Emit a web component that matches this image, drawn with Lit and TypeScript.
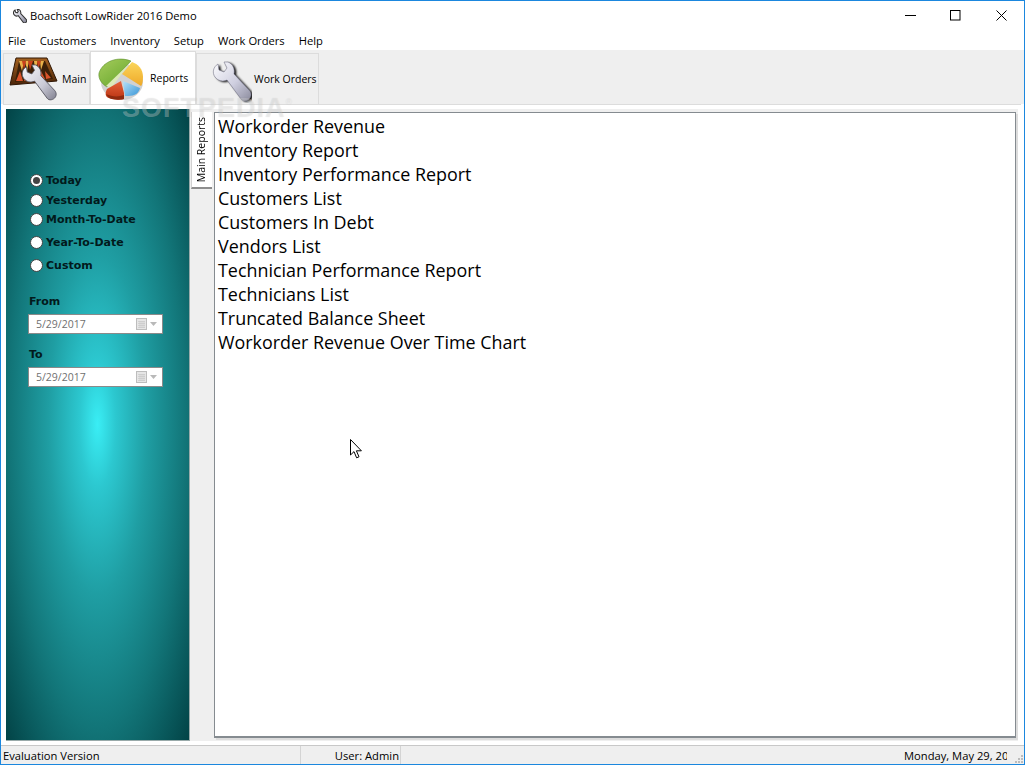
import { LitElement, html, css, svg } from "lit";
import { customElement } from "lit/decorators.js";

const MENU = ["File", "Customers", "Inventory", "Setup", "Work Orders", "Help"];
const RANGES = [
  { label: "Today", cls: "r-today", on: true },
  { label: "Yesterday", cls: "r-yesterday" },
  { label: "Month-To-Date", cls: "r-month" },
  { label: "Year-To-Date", cls: "r-year" },
  { label: "Custom", cls: "r-custom" },
];
const REPORTS = [
  "Workorder Revenue",
  "Inventory Report",
  "Inventory Performance Report",
  "Customers List",
  "Customers In Debt",
  "Vendors List",
  "Technician Performance Report",
  "Technicians List",
  "Truncated Balance Sheet",
  "Workorder Revenue Over Time Chart",
];

const WRENCH = "M6 3C1 6 0 12 3 16C6 20 11 21 15 19L29 38C31 41 36 40 38 37C40 34 39 31 37 29L22 13C23 8 21 3 16 1L12 1L15 7L12 11L7 9Z";

const steel = svg`<linearGradient id="steel" x1="0" y1="0" x2="1" y2="1">
  <stop offset="0" stop-color="#fafafc"/><stop offset=".5" stop-color="#c9c9d6"/><stop offset="1" stop-color="#7d7d8e"/>
</linearGradient>`;

const titleIcon = html`<svg class="title-icon" width="14" height="14" viewBox="0 0 40 40">
  <defs>${steel}</defs>
  <path d=${WRENCH} fill="url(#steel)" stroke="#333" stroke-width="3"/>
</svg>`;

const boardIcon = html`<svg class="tab-icon" width="52" height="46" viewBox="0 0 52 46">
  <defs>
    <linearGradient id="steel2" x1="0" y1="0" x2="1" y2="1">
      <stop offset="0" stop-color="#f8f8fa"/><stop offset=".6" stop-color="#cacad6"/><stop offset="1" stop-color="#80808f"/>
    </linearGradient>
    <linearGradient id="frame" x1="0" y1="0" x2="0" y2="1">
      <stop offset="0" stop-color="#a3601f"/><stop offset="1" stop-color="#4a2408"/>
    </linearGradient>
  </defs>
  <path d="M8 2L39 2L49 25L2 29Z" fill="url(#frame)" stroke="#2e1604"/>
  <path d="M11 5L37 5L45 23L7 26Z" fill="#3b2008"/>
  <path d="M11 5L14 15L16 5ZM17 5L19 15L21 5ZM26 5L27 14L30 5ZM32 5L33 14L36 5Z" fill="#e8b24a"/>
  <path d="M14 5L16 14L18 5ZM20 5L22 14L25 5ZM29 5L30 14L33 5Z" fill="#c8401c"/>
  <path d="M8 25L12 15L15 25ZM16 25L18 16L21 24ZM24 24L26 15L29 24ZM32 23L33 15L37 23ZM38 23L37 15L43 22Z" fill="#d9532a"/>
  <g transform="translate(13 8) scale(.9)">
    <path d=${WRENCH} fill="url(#steel2)" stroke="#55555f" stroke-width="1"/>
  </g>
</svg>`;

const pieIcon = html`<svg class="tab-icon" width="46" height="46" viewBox="0 0 46 46">
  <defs>
    <linearGradient id="pg" x1="0" y1="0" x2=".8" y2="1"><stop offset="0" stop-color="#a5cc5c"/><stop offset="1" stop-color="#69a82e"/></linearGradient>
    <linearGradient id="py" x1="0" y1="0" x2="0" y2="1"><stop offset="0" stop-color="#fbd65a"/><stop offset="1" stop-color="#eea92a"/></linearGradient>
    <linearGradient id="pb" x1="0" y1="0" x2="1" y2="1"><stop offset="0" stop-color="#b6e0f7"/><stop offset="1" stop-color="#3a97d8"/></linearGradient>
    <linearGradient id="pr" x1="0" y1="0" x2="0" y2="1"><stop offset="0" stop-color="#e8623a"/><stop offset="1" stop-color="#b83312"/></linearGradient>
  </defs>
  <ellipse cx="24" cy="27" rx="21" ry="18" fill="#000" opacity=".18"/>
  <path d="M33 6C20 1 5 6 1 18C0 24 4 29 9 32L33 6Z" fill="url(#pg)" stroke="#5d8f2b" stroke-width=".6"/>
  <path d="M8 31L32 8L13 33Z" fill="#dceab8"/>
  <path d="M34 7C40 9 45 14 45 22C45 27 44 30 43 31L24 19Z" fill="url(#py)"/>
  <path d="M25 26L42 33C41 38 37 41 30 41L27 41Z" fill="url(#pb)"/>
  <path d="M23 26L9 34C7 38 7 42 11 43C17 45 23 45 26 44L26 38Z" fill="url(#pr)"/>
  <path d="M8 39C14 42 21 42 26 40L26 44C21 45 15 45 11 43Z" fill="#8f2a0e"/>
</svg>`;

const wrenchIcon = html`<svg class="tab-icon" width="40" height="42" viewBox="0 0 40 42">
  <defs>
    <linearGradient id="steel3" x1="0" y1="0" x2="1" y2="1">
      <stop offset="0" stop-color="#fcfcfe"/><stop offset=".55" stop-color="#cfcfe0"/><stop offset="1" stop-color="#8a8a9c"/>
    </linearGradient>
    <filter id="dark" x="-20%" y="-20%" width="140%" height="140%"><feGaussianBlur stdDeviation="1.2"/></filter>
  </defs>
  <path d=${WRENCH} transform="translate(2 1)" fill="#000" filter="url(#dark)"/>
  <path d=${WRENCH} fill="url(#steel3)" stroke="#77778a" stroke-width=".6"/>
</svg>`;

const calendar = html`<svg class="cal" width="22" height="12" viewBox="0 0 22 12">
  <rect x=".5" y=".5" width="10" height="11" fill="#e6e6e6" stroke="#bdbdbd"/>
  <path d="M2 3.5H9M2 5.5H9M2 7.5H9M2 9.5H9M4 3V10M6 3V10M8 3V10" stroke="#c9c9c9" stroke-width=".7"/>
  <path d="M14 4H21L17.5 8Z" fill="#b9b9b9"/>
</svg>`;

@customElement("app-root")
export class AppRoot extends LitElement {
  static styles = css`
    :host {
      display: block;
      position: relative;
      width: 1025px;
      height: 765px;
      overflow: hidden;
      font-family: "Open Sans", "Noto Sans", sans-serif;
      font-size: 12px;
      color: #000;
    }
    .win {
      box-sizing: border-box;
      width: 1025px;
      height: 765px;
      border: 1px solid #1b87de;
      display: flex;
      flex-direction: column;
      background: #fff;
    }
    .title {
      height: 29px;
      display: flex;
      align-items: center;
      padding-left: 12px;
      flex: none;
    }
    .title-icon { margin-right: 3px; }
    .title-text { font-size: 11.2px; }
    .controls { margin-left: auto; display: flex; }
    .ctl {
      width: 45px;
      height: 29px;
      display: flex;
      align-items: center;
      justify-content: center;
    }
    .ctl:last-child { margin-left: 1px; }
    .menu {
      height: 20px;
      display: flex;
      align-items: center;
      gap: 14px;
      padding-left: 7px;
      flex: none;
      font-size: 11.2px;
    }
    .tabs {
      height: 54px;
      flex: none;
      background: #efefef;
      display: flex;
      align-items: flex-end;
      padding-left: 2px;
      box-sizing: border-box;
    }
    .tab {
      box-sizing: border-box;
      height: 51px;
      display: flex;
      align-items: center;
      border: 1px solid #dcdcdc;
      border-bottom: none;
      font-size: 10.5px;
    }
    .tab-main { width: 87px; padding-left: 4px; }
    .tab-main span { margin-left: 2px; }
    .tab-reports {
      width: 106px;
      height: 53px;
      background: #fff;
      padding-left: 7px;
    }
    .tab-reports span { margin: -1px 0 0 6px; }
    .tab-work { width: 123px; padding-left: 15px; }
    .tab-work .tab-icon { margin-top: 5px; }
    .tab-work span { margin-left: 2px; }
    .page {
      flex: 1;
      min-height: 0;
      margin: 0 3px 0 2px;
      padding: 4px 3px 4px 3px;
      background: #fff;
      border-top: 1px solid #dcdcdc;
      display: flex;
      box-sizing: border-box;
    }
    .side {
      box-sizing: border-box;
      width: 184px;
      flex: none;
      padding: 63px 0 0 23px;
      background: radial-gradient(ellipse at 50% 50%, #3aeef5 0, #2cc8d0 14%, #1f9ea3 38%, #127578 68%, #024346 100%);
      border-right: 1px solid #9aa;
      border-bottom: 1px solid #9aa;
    }
    .radio {
      display: flex;
      align-items: center;
      gap: 3px;
      font: bold 11px "DejaVu Sans", sans-serif;
      color: #021a1c;
      height: 16px;
    }
    .r-yesterday { margin-top: 4px; }
    .r-month { margin-top: 3px; }
    .r-year { margin-top: 7px; }
    .r-custom { margin-top: 7px; }
    .dot {
      box-sizing: border-box;
      width: 13px;
      height: 13px;
      margin-left: 1px;
      border-radius: 50%;
      background: #fff;
      border: 1px solid #444;
      display: flex;
      align-items: center;
      justify-content: center;
    }
    .dot i {
      width: 7px;
      height: 7px;
      border-radius: 50%;
      background: #444;
    }
    .field-label {
      font: bold 11px "DejaVu Sans", sans-serif;
      color: #021a1c;
      margin-top: 20px;
      height: 21px;
      padding-top: 2px;
      box-sizing: border-box;
    }
    .field-to { margin-top: 12px; }
    .date {
      box-sizing: border-box;
      width: 135px;
      height: 20px;
      margin-left: -1px;
      background: #fff;
      border: 1px solid #8a8a8a;
      display: flex;
      align-items: center;
      padding-left: 7px;
      font-size: 10.5px;
      color: #6f6f6f;
    }
    .cal { margin-left: auto; margin-right: 4px; }
    .strip {
      flex: 1;
      background: #efefef;
      display: flex;
      min-width: 0;
    }
    .vtabs {
      width: 24px;
      flex: none;
      padding: 3px 0 0 1px;
      box-sizing: border-box;
    }
    .vtab {
      box-sizing: border-box;
      width: 21px;
      height: 77px;
      background: #fff;
      border-left: 1px solid #d0d0d0;
      border-bottom: 2px solid #8d8d8d;
      display: flex;
      align-items: center;
      justify-content: center;
      padding-right: 3px;
      font-size: 10.5px;
    }
    .vtab span { writing-mode: vertical-rl; transform: rotate(180deg); white-space: nowrap; }
    .list {
      box-sizing: border-box;
      flex: 1;
      min-width: 0;
      height: 626px;
      margin: 3px 2px 0 0;
      background: #fff;
      border: 1px solid #858b90;
      border-bottom-width: 2px;
      box-shadow: 2px 2px 0 #dcdcdc;
      padding: 1px 0 0 3px;
      font-size: 17.9px;
      line-height: 24px;
    }
    .status {
      height: 19px;
      flex: none;
      box-sizing: border-box;
      border-top: 1px solid #c8c8c8;
      background: #efefef;
      display: flex;
      align-items: center;
      font-size: 11.2px;
    }
    .st-a, .st-b, .st-c { height: 100%; line-height: 19px; box-sizing: border-box; }
    .st-a { width: 300px; padding-left: 2px; border-right: 1px solid #d4d4d4; }
    .st-b { width: 100px; padding-right: 1px; text-align: right; border-right: 1px solid #d4d4d4; }
    .st-c { flex: 1; min-width: 0; padding-left: 503px; white-space: nowrap; overflow: hidden; }
    .grip { width: 17px; flex: none; display: flex; justify-content: flex-end; align-items: flex-end; height: 100%; }
    .watermark {
      position: absolute;
      left: 122px;
      top: 93px;
      font: bold 27px "Liberation Sans", sans-serif;
      letter-spacing: 1px;
      color: rgba(255, 255, 255, 0.3);
      text-shadow: 0 0 1px rgba(0, 0, 0, 0.12);
      pointer-events: none;
    }
    .watermark small { font-size: 9px; vertical-align: 12px; font-weight: normal; }
    .pointer { position: absolute; left: 350px; top: 439px; }
  `;

  render() {
    return html`
      <div class="win">
        <div class="title">
          ${titleIcon}
          <span class="title-text">Boachsoft LowRider 2016 Demo</span>
          <div class="controls">
            <div class="ctl">
              <svg width="11" height="11" viewBox="0 0 11 11"><path d="M0 5.5H11" stroke="#000"/></svg>
            </div>
            <div class="ctl">
              <svg width="11" height="11" viewBox="0 0 11 11"><rect x=".5" y=".5" width="9.5" height="9.5" fill="none" stroke="#000"/></svg>
            </div>
            <div class="ctl">
              <svg width="11" height="11" viewBox="0 0 11 11"><path d="M.5 .5L10.5 10.5M10.5 .5L.5 10.5" stroke="#000"/></svg>
            </div>
          </div>
        </div>
        <div class="menu">${MENU.map((m) => html`<span>${m}</span>`)}</div>
        <div class="tabs">
          <div class="tab tab-main">${boardIcon}<span>Main</span></div>
          <div class="tab tab-reports">${pieIcon}<span>Reports</span></div>
          <div class="tab tab-work">${wrenchIcon}<span>Work Orders</span></div>
        </div>
        <div class="page">
          <div class="side">
            ${RANGES.map(
              (r) => html`<div class="radio ${r.cls}">
                <span class="dot">${r.on ? html`<i></i>` : ""}</span>${r.label}
              </div>`
            )}
            <div class="field-label">From</div>
            <div class="date">5/29/2017${calendar}</div>
            <div class="field-label field-to">To</div>
            <div class="date">5/29/2017${calendar}</div>
          </div>
          <div class="strip">
            <div class="vtabs"><div class="vtab"><span>Main Reports</span></div></div>
            <div class="list">${REPORTS.map((r) => html`<div>${r}</div>`)}</div>
          </div>
        </div>
        <div class="status">
          <div class="st-a">Evaluation Version</div>
          <div class="st-b">User: Admin</div>
          <div class="st-c">Monday, May 29, 2017</div>
          <div class="grip">
            <svg width="11" height="11" viewBox="0 0 11 11"><path d="M8 2h2v2H8zM5 5h2v2H5zM8 5h2v2H8zM2 8h2v2H2zM5 8h2v2H5zM8 8h2v2H8z" fill="#bcbcbc"/></svg>
          </div>
        </div>
      </div>
      <div class="watermark">SOFTPEDIA<small>®</small></div>
      <svg class="pointer" width="13" height="20" viewBox="0 0 13 20">
        <path d="M.5 .5V16L4 12.6L6.6 18.8L9 17.8L6.4 11.8H11.4Z" fill="#fff" stroke="#000"/>
      </svg>
    `;
  }
}
